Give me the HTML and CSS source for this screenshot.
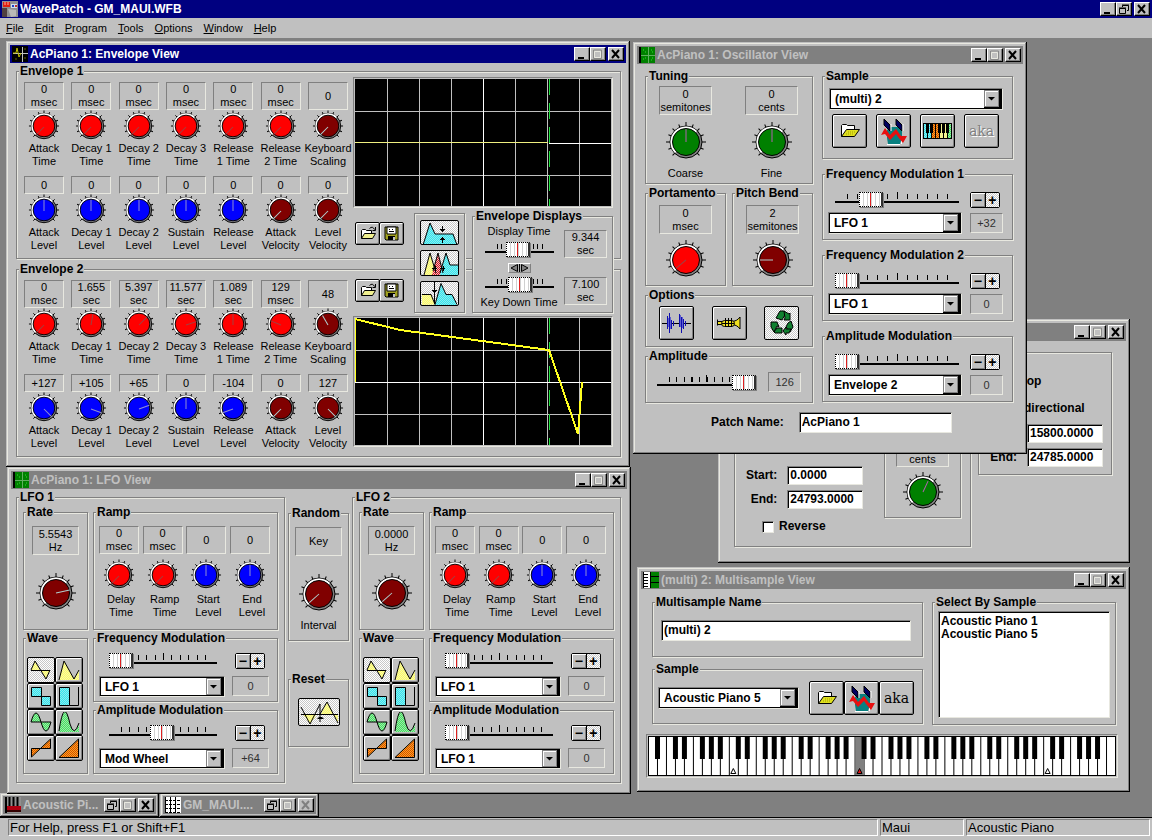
FILE: index.html
```html
<!DOCTYPE html>
<html lang="en">
<head>
    <meta charset="UTF-8">
    <title>WavePatch - GM_MAUI.WFB</title>
    <link rel="stylesheet" href="styles.css">
</head>
<body>
    <!-- shared drawings -->
    <svg class="defs" width="0" height="0">
        <defs>
            <pattern id="dots-yellow" width="2" height="2" patternUnits="userSpaceOnUse"><rect width="2" height="2" fill="#ffff60"/><path d="M0 0h1v1h-1zM1 1h1v1h-1z" fill="#f4f4b0"/></pattern>
            <pattern id="dots-cyan" width="2" height="2" patternUnits="userSpaceOnUse"><rect width="2" height="2" fill="#30e8f0"/><path d="M0 0h1v1h-1zM1 1h1v1h-1z" fill="#90e8ec"/></pattern>
            <pattern id="dots-green" width="2" height="2" patternUnits="userSpaceOnUse"><rect width="2" height="2" fill="#40e860"/><path d="M0 0h1v1h-1zM1 1h1v1h-1z" fill="#a0e0a8"/></pattern>
            <pattern id="dots-orange" width="2" height="2" patternUnits="userSpaceOnUse"><rect width="2" height="2" fill="#ffa020"/><path d="M0 0h1v1h-1zM1 1h1v1h-1z" fill="#d05000"/></pattern>
            <pattern id="dots-red" width="2" height="2" patternUnits="userSpaceOnUse"><rect width="2" height="2" fill="#f4c0c0"/><path d="M0 0h1v1h-1zM1 1h1v1h-1z" fill="#d01020"/></pattern>
            <pattern id="white-keys" width="9" height="39" patternUnits="userSpaceOnUse"><rect width="9" height="39" fill="#fff"/><path d="M0 0h1v39h-1z"/></pattern>
            <pattern id="black-keys" x="18" width="63" height="39" patternUnits="userSpaceOnUse"><path d="M7 0h5v23h-5zM16 0h5v23h-5zM34 0h5v23h-5zM43 0h5v23h-5zM52 0h5v23h-5z"/></pattern>
        </defs>
        <symbol id="dial" viewBox="0 0 36 34">
            <g stroke="#000">
                <path d="M18 17V0.5"/>
                <path d="M18 17V1" transform="rotate(22.5 18 17)"/>
                <path d="M18 17V1" transform="rotate(45 18 17)"/>
                <path d="M18 17V1" transform="rotate(67.5 18 17)"/>
                <path d="M18 17V1" transform="rotate(90 18 17)"/>
                <path d="M18 17V1" transform="rotate(112.5 18 17)"/>
                <path d="M18 17V1" transform="rotate(135 18 17)"/>
                <path d="M18 17V1" transform="rotate(-22.5 18 17)"/>
                <path d="M18 17V1" transform="rotate(-45 18 17)"/>
                <path d="M18 17V1" transform="rotate(-67.5 18 17)"/>
                <path d="M18 17V1" transform="rotate(-90 18 17)"/>
                <path d="M18 17V1" transform="rotate(-112.5 18 17)"/>
                <path d="M18 17V1" transform="rotate(-135 18 17)"/>
            </g>
            <circle cx="18" cy="17" r="13.5" fill="#808080" stroke="#000"/>
            <path d="M8.5 26.5a13.3 13.3 0 0 1 19 -19z" fill="#fff"/>
            <circle cx="18" cy="17" r="11.5" fill="currentColor" stroke="#000"/>
        </symbol>
        <symbol id="dial-big" viewBox="0 0 42 42">
            <g stroke="#000">
                <path d="M21 21V1"/>
                <path d="M21 21V2" transform="rotate(22.5 21 21)"/>
                <path d="M21 21V2" transform="rotate(45 21 21)"/>
                <path d="M21 21V2" transform="rotate(67.5 21 21)"/>
                <path d="M21 21V1" transform="rotate(90 21 21)"/>
                <path d="M21 21V2" transform="rotate(112.5 21 21)"/>
                <path d="M21 21V2" transform="rotate(135 21 21)"/>
                <path d="M21 21V2" transform="rotate(-22.5 21 21)"/>
                <path d="M21 21V2" transform="rotate(-45 21 21)"/>
                <path d="M21 21V2" transform="rotate(-67.5 21 21)"/>
                <path d="M21 21V1" transform="rotate(-90 21 21)"/>
                <path d="M21 21V2" transform="rotate(-112.5 21 21)"/>
                <path d="M21 21V2" transform="rotate(-135 21 21)"/>
            </g>
            <circle cx="21" cy="21" r="16" fill="#808080" stroke="#000"/>
            <path d="M10 32a15.5 15.5 0 0 1 22 -22z" fill="#fff"/>
            <circle cx="21" cy="21" r="13.5" fill="currentColor" stroke="#000"/>
        </symbol>
        <symbol id="ic-folder" viewBox="0 0 20 14">
            <path d="M1.5 12.5v-11l1-1h4l1 1h7v4" fill="#fff" stroke="#000"/>
            <path d="M1.5 12.5l5 -7h13l-5 7z" fill="#e0e020" stroke="#000"/>
            <path d="M6 10h8M8 8h8" stroke="#a0a000" stroke-dasharray="1 1"/>
        </symbol>
        <symbol id="ic-open" viewBox="0 0 16 15">
            <path d="M1.5 12.5v-8l1-1h3l1 1h5v3" fill="#fff" stroke="#000"/>
            <path d="M1.5 12.5l3 -5h11l-3 5z" fill="#f0f090" stroke="#000"/>
            <path d="M9.5 2.5q3-3 5 1M15.5 1v3.5h-3" fill="none" stroke="#000"/>
        </symbol>
        <symbol id="ic-save" viewBox="0 0 15 15">
            <path d="M1 1h13v13H2l-1-1z" fill="#a0a020" stroke="#000"/>
            <path d="M3 1h9v7H3z" fill="#fff" stroke="#000"/>
            <path d="M5 3.5h1M8 3.5h1M5 5.5h5" stroke="#000"/>
            <path d="M4 10h7v4H4z"/>
            <path d="M9 11h2v3H9z" fill="#c0c0c0"/>
        </symbol>
        <symbol id="ic-wave-edit" viewBox="0 0 27 27">
            <path d="M7 12l4-3h9l2 3v8l-2 6H8l-1-6z" fill="#088080"/>
            <path d="M7 26.5h13M21.5 20v6" stroke="#fff"/>
            <path d="M1 17l4-7 5 7 6-6 5 7h6l-4 7-5-6-2-3-6 6-5-6z" fill="#e81010"/>
            <path d="M4 1l6 6v6l-6-6zM16 1l6 6v6l-6-6z" fill="#000060" stroke="#000"/>
            <path d="M11 6v7M23 6v7" stroke="#fff"/>
        </symbol>
        <symbol id="ic-min" viewBox="0 0 12 10"><path d="M2 8h6v2H2z"/></symbol>
        <symbol id="ic-max" viewBox="0 0 12 10"><path d="M1.5 1h8M1.5 1v8.5h8V1" fill="none" stroke="#888"/><path d="M2.5 2.5h6v6h-6z" fill="none" stroke="#e8e8e0"/></symbol>
        <symbol id="ic-restore" viewBox="0 0 12 10"><path d="M4.5 3V1.5h6V6.5H9M4 1h7M1.5 4.5h6v5h-6zM1 4h7" fill="none" stroke="#000"/></symbol>
        <symbol id="ic-close" viewBox="0 0 12 10"><path d="M2 1l7 8M9 1l-7 8" fill="none" stroke="currentColor" stroke-width="2"/></symbol>
        <symbol id="ic-grid" viewBox="0 0 16 16">
            <rect width="16" height="16" fill="#008000"/>
            <path d="M0 0h2v16h-2z"/>
            <path d="M9.5 0v16M2 8.5h14" stroke="#60b060"/>
            <path d="M4 3h1M6 5h1M12 3h1M13 5h1M4 12h1M6 11h1M12 13h1M13 11h1" stroke="#30e030"/>
        </symbol>
        <symbol id="w-tri" viewBox="0 0 22 20"><path d="M1 10l4-9 5 9zM11 10h9l-4 9z" fill="url(#dots-yellow)"/><path d="M1 10.5h19M1 10L5 1l11 18 4-9" fill="none" stroke="#000"/></symbol>
        <symbol id="w-tri2" viewBox="0 0 22 20"><path d="M1 20L6 1l10 18 5-9v10z" fill="url(#dots-yellow)"/><path d="M1 20L6 1l10 18 5-9" fill="none" stroke="#000"/></symbol>
        <symbol id="w-sq" viewBox="0 0 22 20"><path d="M1.5 1.5h10v9h-10zM11.5 10.5h9v9h-9z" fill="url(#dots-cyan)" stroke="#000"/></symbol>
        <symbol id="w-sq2" viewBox="0 0 22 20"><path d="M1.5 19.5V1.5h10v18z" fill="url(#dots-cyan)" stroke="#000"/><path d="M11.5 19.5h9V1" fill="none" stroke="#000"/></symbol>
        <symbol id="w-sin" viewBox="0 0 22 20"><path d="M1 10q5-18 10 0q5 18 10 0z" fill="url(#dots-green)" stroke="#000"/></symbol>
        <symbol id="w-sin2" viewBox="0 0 22 20"><path d="M1 19Q6-16 12 12Q16 26 21 12v8H1z" fill="url(#dots-green)"/><path d="M1 19Q6-16 12 12Q16 26 21 11" fill="none" stroke="#000"/></symbol>
        <symbol id="w-saw" viewBox="0 0 22 20"><path d="M1.5 19v-8.500h19V1z" fill="url(#dots-orange)" stroke="#000"/></symbol>
        <symbol id="w-saw2" viewBox="0 0 22 20"><path d="M1 19.5h19.500V1z" fill="url(#dots-orange)" stroke="#000"/></symbol>
    </svg>

    <header class="titlebar app-title">
        <svg class="title-icon" viewBox="0 0 16 16"><rect width="16" height="16" fill="#909090"/><path d="M1 1h7v5H1z" fill="#e02010"/><path d="M3 1v3M6 1v3" stroke="#ffb0a0"/><path d="M9 3h6v4H9z" fill="#d0e0f0"/><path d="M10 4h2v2h-2z" fill="#2040c0"/><path d="M13 4h2v2h-2z" fill="#c03030"/><path d="M0 7h5v9H0z" fill="#504040"/><path d="M6 8l8 1v6l-5 1z" fill="#b8b8b8"/></svg>
        <h1>WavePatch - GM_MAUI.WFB</h1>
        <button aria-label="Minimize"><svg><use href="#ic-min"/></svg></button>
        <button aria-label="Restore"><svg><use href="#ic-restore"/></svg></button>
        <button class="close" aria-label="Close"><svg><use href="#ic-close"/></svg></button>
    </header>
    <nav class="menu">
        <a href="#"><u>F</u>ile</a>
        <a href="#"><u>E</u>dit</a>
        <a href="#"><u>P</u>rogram</a>
        <a href="#"><u>T</u>ools</a>
        <a href="#"><u>O</u>ptions</a>
        <a href="#"><u>W</u>indow</a>
        <a href="#"><u>H</u>elp</a>
    </nav>

    <main class="desktop">

        <!-- minimised windows -->
        <div class="tray">
            <section class="window small">
                <div class="titlebar">
                    <svg class="title-icon" viewBox="0 0 16 16"><rect width="16" height="16" fill="#909090"/><path d="M0 0h2v16H0z"/><path d="M4.5 0v9M8.5 0v9M12.5 0v9" stroke="#000" stroke-width="2"/><path d="M2 9h14v4H2z" fill="#b00010"/><path d="M2 13h14v2H2z" fill="#300"/></svg>
                    <h2>Acoustic Pi...</h2>
                    <button aria-label="Restore"><svg><use href="#ic-restore"/></svg></button>
                    <button aria-label="Maximize"><svg><use href="#ic-max"/></svg></button>
                    <button class="close" aria-label="Close"><svg><use href="#ic-close"/></svg></button>
                </div>
            </section>
            <section class="window small">
                <div class="titlebar">
                    <svg class="title-icon" viewBox="0 0 16 16"><rect width="16" height="16" fill="#fff"/><path d="M0 0h1v16H0zM5 0h1v16H5zM10 0h1v16h-1z"/><path d="M0 3.5h16M0 7.5h16M0 11.5h16M0 15.5h16" stroke="#000" stroke-dasharray="3 1"/></svg>
                    <h2>GM_MAUI....</h2>
                    <button aria-label="Restore"><svg><use href="#ic-restore"/></svg></button>
                    <button aria-label="Maximize"><svg><use href="#ic-max"/></svg></button>
                    <button class="close" aria-label="Close" disabled><svg><use href="#ic-close"/></svg></button>
                </div>
            </section>
        </div>

        <!-- sample window, mostly behind the oscillator -->
        <section class="window win-sample">
            <div class="titlebar">
                <h2></h2>
                <button aria-label="Minimize"><svg><use href="#ic-min"/></svg></button>
                <button aria-label="Maximize"><svg><use href="#ic-max"/></svg></button>
                <button class="close" aria-label="Close"><svg><use href="#ic-close"/></svg></button>
            </div>
            <div class="sample-body">
                <div class="group range-group">
                    <div class="range-fields">
                        <label class="field">Start: <input type="text" value="0.0000"></label>
                        <label class="field">End: <input type="text" value="24793.0000"></label>
                        <label class="check"><input type="checkbox"> Reverse</label>
                    </div>
                    <div class="group cents-group">
                        <div class="knob big">
                            <output><br>cents</output>
                            <svg class="green"><use href="#dial-big"/><path class="hand" d="M21 21V9" transform="rotate(25 21 21)"/></svg>
                        </div>
                    </div>
                </div>
                <div class="group loop-group">
                    <label class="radio"><input type="radio" name="loop"> Loop</label>
                    <label class="radio"><input type="radio" name="loop"> Bidirectional</label>
                    <label class="field"><input type="text" value="15800.0000"></label>
                    <label class="field">End: <input type="text" value="24785.0000"></label>
                </div>
            </div>
        </section>

        <!-- multisample window -->
        <section class="window win-multi">
            <div class="titlebar">
                <svg class="title-icon" viewBox="0 0 16 16"><rect width="16" height="16" fill="#008000"/><path d="M0 0h8v16H0z" fill="#fff"/><path d="M0 0h1v16H0zM7 0h1v16H7z"/><path d="M1 2.5h4M1 5.5h4M1 8.5h4M1 11.5h4M1 14.5h4M8 4.5h8M8 10.5h8" stroke="#000"/></svg>
                <h2>(multi) 2: Multisample View</h2>
                <button aria-label="Minimize"><svg><use href="#ic-min"/></svg></button>
                <button aria-label="Maximize"><svg><use href="#ic-max"/></svg></button>
                <button class="close" aria-label="Close"><svg><use href="#ic-close"/></svg></button>
            </div>
            <div class="multi-body">
                <div class="multi-left">
                    <fieldset>
                        <legend>Multisample Name</legend>
                        <div class="name-box"><input type="text" aria-label="Multisample Name" value="(multi) 2"></div>
                    </fieldset>
                    <fieldset>
                        <legend>Sample</legend>
                        <div class="pick-box">
                            <select class="combo" aria-label="Sample"><option>Acoustic Piano 5</option></select>
                            <div class="btn-set">
                                <button class="tool" aria-label="Open"><svg width="20" height="14"><use href="#ic-folder"/></svg></button>
                                <button class="tool" aria-label="Edit wave"><svg width="27" height="27"><use href="#ic-wave-edit"/></svg></button>
                                <button class="tool aka">aka</button>
                            </div>
                        </div>
                    </fieldset>
                </div>
                <fieldset class="select-group">
                    <legend>Select By Sample</legend>
                    <div class="list-box">
                        <select size="8" aria-label="Select By Sample">
                            <option>Acoustic Piano 1</option>
                            <option>Acoustic Piano 5</option>
                        </select>
                    </div>
                </fieldset>
            </div>
            <div class="keyboard">
                <svg viewBox="0 0 469 40" preserveAspectRatio="none" shape-rendering="crispEdges">
                    <rect width="469" height="39" fill="url(#white-keys)"/>
                    <path d="M208 0h8v39h-8z" fill="#808080"/>
                    <path d="M7 0h5v23H7z"/>
                    <rect x="18" width="441" height="39" fill="url(#black-keys)"/>
                    <path d="M0 0.5h469M0 39.5h469" stroke="#000"/>
                    <g stroke="#000" shape-rendering="auto">
                        <path d="M83 37.5l2.500-5 2.500 5z" fill="#fff"/>
                        <path d="M209.500 37.5l2.500-5 2.500 5z" fill="#e01010"/>
                        <path d="M398 37.5l2.500-5 2.500 5z" fill="#fff"/>
                    </g>
                </svg>
            </div>
        </section>

        <!-- envelope window -->
        <section class="window win-env active">
            <div class="titlebar">
                <svg class="title-icon" viewBox="0 0 16 16"><rect width="16" height="16"/><path d="M10.5 1v15M1 7.5h15" stroke="#c0c0c0"/><path d="M1 7l3 0 1-5 2 9 2-4" fill="none" stroke="#c0c000"/><path d="M3 13h2M12 3h2M12 12h2" stroke="#606000"/></svg>
                <h2>AcPiano 1: Envelope View</h2>
                <button aria-label="Minimize"><svg><use href="#ic-min"/></svg></button>
                <button aria-label="Maximize"><svg><use href="#ic-max"/></svg></button>
                <button class="close" aria-label="Close"><svg><use href="#ic-close"/></svg></button>
            </div>
            <div class="env-body">
                <fieldset>
                    <legend>Envelope 1</legend>
                    <div class="env">
                        <div class="knobs">
                            <div class="knob"><output>0<br>msec</output><svg class="red"><use href="#dial"/><path class="hand" d="M18 17V6" transform="rotate(-135 18 17)"/></svg><span>Attack<br>Time</span></div>
                            <div class="knob"><output>0<br>msec</output><svg class="red"><use href="#dial"/><path class="hand" d="M18 17V6" transform="rotate(-135 18 17)"/></svg><span>Decay 1<br>Time</span></div>
                            <div class="knob"><output>0<br>msec</output><svg class="red"><use href="#dial"/><path class="hand" d="M18 17V6" transform="rotate(-135 18 17)"/></svg><span>Decay 2<br>Time</span></div>
                            <div class="knob"><output>0<br>msec</output><svg class="red"><use href="#dial"/><path class="hand" d="M18 17V6" transform="rotate(-135 18 17)"/></svg><span>Decay 3<br>Time</span></div>
                            <div class="knob"><output>0<br>msec</output><svg class="red"><use href="#dial"/><path class="hand" d="M18 17V6" transform="rotate(-135 18 17)"/></svg><span>Release<br>1 Time</span></div>
                            <div class="knob"><output>0<br>msec</output><svg class="red"><use href="#dial"/><path class="hand" d="M18 17V6" transform="rotate(-135 18 17)"/></svg><span>Release<br>2 Time</span></div>
                            <div class="knob"><output class="tall">0</output><svg class="maroon"><use href="#dial"/><path class="hand" d="M18 17V6" transform="rotate(-135 18 17)"/></svg><span>Keyboard<br>Scaling</span></div>

                            <div class="knob"><output>0</output><svg class="blue"><use href="#dial"/><path class="hand" d="M18 17V6"/></svg><span>Attack<br>Level</span></div>
                            <div class="knob"><output>0</output><svg class="blue"><use href="#dial"/><path class="hand" d="M18 17V6"/></svg><span>Decay 1<br>Level</span></div>
                            <div class="knob"><output>0</output><svg class="blue"><use href="#dial"/><path class="hand" d="M18 17V6"/></svg><span>Decay 2<br>Level</span></div>
                            <div class="knob"><output>0</output><svg class="blue"><use href="#dial"/><path class="hand" d="M18 17V6"/></svg><span>Sustain<br>Level</span></div>
                            <div class="knob"><output>0</output><svg class="blue"><use href="#dial"/><path class="hand" d="M18 17V6"/></svg><span>Release<br>Level</span></div>
                            <div class="knob"><output>0</output><svg class="maroon"><use href="#dial"/><path class="hand" d="M18 17V6" transform="rotate(-135 18 17)"/></svg><span>Attack<br>Velocity</span></div>
                            <div class="knob"><output>0</output><svg class="maroon"><use href="#dial"/><path class="hand" d="M18 17V6" transform="rotate(-135 18 17)"/></svg><span>Level<br>Velocity</span></div>
                        </div>
                        <div class="env-right">
                            <div class="graph">
                                <svg viewBox="0 0 256 127" preserveAspectRatio="none">
                                    <path class="grid" d="M32.5 0v127M64.5 0v127M96.5 0v127M160.5 0v127M192.5 0v127M224.5 0v127M0 32.5h256M0 96.5h256"/>
                                    <path class="axis" d="M128.5 0v127M194 64.5h62"/>
                                    <path d="M0 63.5h193" stroke="#f0f080"/>
                                    <path class="marker" d="M194.5 0v127"/>
                                </svg>
                            </div>
                            <div class="file-btns">
                                <button class="tool mini" aria-label="Open envelope 1"><svg width="16" height="15"><use href="#ic-open"/></svg></button><button class="tool mini" aria-label="Save envelope 1"><svg width="15" height="15"><use href="#ic-save"/></svg></button>
                            </div>
                        </div>
                    </div>
                </fieldset>
                <fieldset>
                    <legend>Envelope 2</legend>
                    <div class="env">
                        <div class="knobs">
                            <div class="knob"><output>0<br>msec</output><svg class="red"><use href="#dial"/><path class="hand" d="M18 17V6" transform="rotate(-135 18 17)"/></svg><span>Attack<br>Time</span></div>
                            <div class="knob"><output>1.655<br>sec</output><svg class="red"><use href="#dial"/><path class="hand" d="M18 17V6" transform="rotate(10 18 17)"/></svg><span>Decay 1<br>Time</span></div>
                            <div class="knob"><output>5.397<br>sec</output><svg class="red"><use href="#dial"/><path class="hand" d="M18 17V6" transform="rotate(45 18 17)"/></svg><span>Decay 2<br>Time</span></div>
                            <div class="knob"><output>11.577<br>sec</output><svg class="red"><use href="#dial"/><path class="hand" d="M18 17V6" transform="rotate(72 18 17)"/></svg><span>Decay 3<br>Time</span></div>
                            <div class="knob"><output>1.089<br>sec</output><svg class="red"><use href="#dial"/><path class="hand" d="M18 17V6"/></svg><span>Release<br>1 Time</span></div>
                            <div class="knob"><output>129<br>msec</output><svg class="red"><use href="#dial"/><path class="hand" d="M18 17V6" transform="rotate(-68 18 17)"/></svg><span>Release<br>2 Time</span></div>
                            <div class="knob"><output class="tall">48</output><svg class="maroon"><use href="#dial"/><path class="hand" d="M18 17V6" transform="rotate(-30 18 17)"/></svg><span>Keyboard<br>Scaling</span></div>

                            <div class="knob"><output>+127</output><svg class="blue"><use href="#dial"/><path class="hand" d="M18 17V6" transform="rotate(135 18 17)"/></svg><span>Attack<br>Level</span></div>
                            <div class="knob"><output>+105</output><svg class="blue"><use href="#dial"/><path class="hand" d="M18 17V6" transform="rotate(110 18 17)"/></svg><span>Decay 1<br>Level</span></div>
                            <div class="knob"><output>+65</output><svg class="blue"><use href="#dial"/><path class="hand" d="M18 17V6" transform="rotate(70 18 17)"/></svg><span>Decay 2<br>Level</span></div>
                            <div class="knob"><output>0</output><svg class="blue"><use href="#dial"/><path class="hand" d="M18 17V6"/></svg><span>Sustain<br>Level</span></div>
                            <div class="knob"><output>-104</output><svg class="blue"><use href="#dial"/><path class="hand" d="M18 17V6" transform="rotate(-110 18 17)"/></svg><span>Release<br>Level</span></div>
                            <div class="knob"><output>0</output><svg class="maroon"><use href="#dial"/><path class="hand" d="M18 17V6" transform="rotate(-135 18 17)"/></svg><span>Attack<br>Velocity</span></div>
                            <div class="knob"><output>127</output><svg class="maroon"><use href="#dial"/><path class="hand" d="M18 17V6" transform="rotate(135 18 17)"/></svg><span>Level<br>Velocity</span></div>
                        </div>
                        <div class="env-right">
                            <div class="file-btns">
                                <button class="tool mini" aria-label="Open envelope 2"><svg width="16" height="15"><use href="#ic-open"/></svg></button><button class="tool mini" aria-label="Save envelope 2"><svg width="15" height="15"><use href="#ic-save"/></svg></button>
                            </div>
                            <div class="graph">
                                <svg viewBox="0 0 256 127" preserveAspectRatio="none">
                                    <path class="grid" d="M32.5 0v127M64.5 0v127M96.5 0v127M160.5 0v127M192.5 0v127M224.5 0v127M0 32.5h256M0 96.5h256"/>
                                    <path class="axis" d="M128.5 0v127M0 64.5h256"/>
                                    <path class="marker" d="M194.5 0v127"/>
                                    <path d="M224.5 92v14" stroke="#000080"/>
                                    <path d="M0.5 64V1" stroke="#ffff20"/>
                                    <path d="M0 1L45 12L194 32L223 116L227 64" fill="none" stroke="#ffff20" stroke-width="2"/>
                                </svg>
                            </div>
                        </div>
                    </div>
                </fieldset>
            </div>
            <!-- panels that sit over both envelopes -->
            <div class="env-panels">
                <div class="group shape-btns">
                    <button class="tool lit" aria-label="Level edit"><svg width="37" height="24"><path d="M2 24L9 2l5 11h18l4 11z" fill="url(#dots-cyan)"/><path d="M2 24L9 2l5 11h18l4 11" fill="none" stroke="#000"/><path d="M21.5 5v6M19 8.5h5M20 9.5h3M21.5 22v-6M19 18.5h5M20 17.5h3" stroke="#000"/></svg></button>
                    <button class="tool lit" aria-label="Time edit"><svg width="37" height="24"><path d="M3 24L9 2l6 22z" fill="url(#dots-yellow)"/><path d="M11 24l6-22 5 22z" fill="url(#dots-red)"/><path d="M19 24l6-22 4 12h8v10z" fill="url(#dots-cyan)"/><path d="M3 24L9 2l6 20M12 20l5-18 5 20M19 22l6-20 4 12h8" fill="none" stroke="#000"/><path d="M11 17.5h5M14.5 15v5M19 17.5h5M22.5 15v5" stroke="#000"/></svg></button>
                    <button class="tool lit" aria-label="Release edit"><svg width="37" height="24"><path d="M1 24V13.5h9l4 10z" fill="url(#dots-yellow)"/><path d="M14 24l6-22 5 12h6l5 10z" fill="url(#dots-cyan)"/><path d="M1 13.5h9l4 10 6-21 5 11h6l5 10" fill="none" stroke="#000"/><path d="M13.5 1v22M11 9.5h5M12 10.5h3" stroke="#000"/></svg></button>
                </div>
                <fieldset class="displays">
                    <legend>Envelope Displays</legend>
                    <div class="displays-body">
                        <div class="displays-sliders">
                            <label for="display-time">Display Time</label>
                            <input class="slider" type="range" id="display-time" min="0" max="127" value="60">
                            <button class="link-btn" aria-label="Link times"><svg width="21" height="8"><path d="M8.5 0.5v7L2 4zM12.5 0.5v7L19 4z" fill="#808080" stroke="#000"/><path d="M10.5 0v8" stroke="#000"/></svg></button>
                            <input class="slider" type="range" id="key-time" min="0" max="127" value="65">
                            <label for="key-time">Key Down Time</label>
                        </div>
                        <div class="displays-values">
                            <output>9.344<br>sec</output>
                            <output>7.100<br>sec</output>
                        </div>
                    </div>
                </fieldset>
            </div>
        </section>

        <!-- LFO window -->
        <section class="window win-lfo">
            <div class="titlebar">
                <svg class="title-icon"><use href="#ic-grid"/></svg>
                <h2>AcPiano 1: LFO View</h2>
                <button aria-label="Minimize"><svg><use href="#ic-min"/></svg></button>
                <button aria-label="Maximize"><svg><use href="#ic-max"/></svg></button>
                <button class="close" aria-label="Close"><svg><use href="#ic-close"/></svg></button>
            </div>
            <div class="lfo-body">
                <fieldset class="lfo">
                    <legend>LFO 1</legend>
                    <div class="lfo-grid">
                        <fieldset>
                            <legend>Rate</legend>
                            <div class="rate-box">
                                <div class="knob big"><output>5.5543<br>Hz</output><svg class="maroon"><use href="#dial-big"/><path class="hand" d="M21 21V7" transform="rotate(78 21 21)"/></svg></div>
                            </div>
                        </fieldset>
                        <fieldset>
                            <legend>Ramp</legend>
                            <div class="ramp-box">
                                <div class="knob"><output class="tall">0<br>msec</output><svg class="red"><use href="#dial"/><path class="hand" d="M18 17V6" transform="rotate(-135 18 17)"/></svg><span>Delay<br>Time</span></div>
                                <div class="knob"><output class="tall">0<br>msec</output><svg class="red"><use href="#dial"/><path class="hand" d="M18 17V6" transform="rotate(-135 18 17)"/></svg><span>Ramp<br>Time</span></div>
                                <div class="knob"><output class="tall">0</output><svg class="blue"><use href="#dial"/><path class="hand" d="M18 17V6"/></svg><span>Start<br>Level</span></div>
                                <div class="knob"><output class="tall">0</output><svg class="blue"><use href="#dial"/><path class="hand" d="M18 17V6"/></svg><span>End<br>Level</span></div>
                            </div>
                        </fieldset>
                        <fieldset>
                            <legend>Wave</legend>
                            <div class="wave-box">
                                <button class="tool lit" aria-label="Triangle"><svg><use href="#w-tri"/></svg></button>
                                <button class="tool" aria-label="Positive triangle"><svg><use href="#w-tri2"/></svg></button>
                                <button class="tool" aria-label="Square"><svg><use href="#w-sq"/></svg></button>
                                <button class="tool" aria-label="Positive square"><svg><use href="#w-sq2"/></svg></button>
                                <button class="tool" aria-label="Sine"><svg><use href="#w-sin"/></svg></button>
                                <button class="tool" aria-label="Positive sine"><svg><use href="#w-sin2"/></svg></button>
                                <button class="tool" aria-label="Sawtooth"><svg><use href="#w-saw"/></svg></button>
                                <button class="tool" aria-label="Positive sawtooth"><svg><use href="#w-saw2"/></svg></button>
                            </div>
                        </fieldset>
                        <div class="lfo-mods">
                            <fieldset>
                                <legend>Frequency Modulation</legend>
                                <div class="mod">
                                    <input class="slider" type="range" aria-label="Amount" min="0" max="127" value="0">
                                    <div class="plusminus"><button>−</button><button class="lit">+</button></div>
                                    <select class="combo" aria-label="Source"><option>LFO 1</option></select>
                                    <output>0</output>
                                </div>
                            </fieldset>
                            <fieldset>
                                <legend>Amplitude Modulation</legend>
                                <div class="mod">
                                    <input class="slider" type="range" aria-label="Amount" min="0" max="127" value="62">
                                    <div class="plusminus"><button>−</button><button class="lit">+</button></div>
                                    <select class="combo" aria-label="Source"><option>Mod Wheel</option></select>
                                    <output>+64</output>
                                </div>
                            </fieldset>
                        </div>
                    </div>
                </fieldset>

                <div class="lfo-mid">
                    <fieldset>
                        <legend>Random</legend>
                        <div class="random-box">
                            <div class="knob big"><output>Key</output><svg class="maroon"><use href="#dial-big"/><path class="hand" d="M21 21V8" transform="rotate(-132 21 21)"/></svg><span>Interval</span></div>
                        </div>
                    </fieldset>
                    <fieldset>
                        <legend>Reset</legend>
                        <div class="reset-box">
                            <button class="tool lit" aria-label="Reset"><svg width="40" height="26"><path d="M4 15h14l-7 10zM22 15l6-12 6 12zM34 15h5v9z" fill="url(#dots-yellow)"/><path d="M2 8l9 17L21 5v18M21 15l7-12 11 21M2 15.5h37" fill="none" stroke="#000"/><path d="M18.5 19.5h6M19.5 18.5h4" stroke="#000"/></svg></button>
                        </div>
                    </fieldset>
                </div>

                <fieldset class="lfo">
                    <legend>LFO 2</legend>
                    <div class="lfo-grid">
                        <fieldset>
                            <legend>Rate</legend>
                            <div class="rate-box">
                                <div class="knob big"><output>0.0000<br>Hz</output><svg class="maroon"><use href="#dial-big"/><path class="hand" d="M21 21V8" transform="rotate(-132 21 21)"/></svg></div>
                            </div>
                        </fieldset>
                        <fieldset>
                            <legend>Ramp</legend>
                            <div class="ramp-box">
                                <div class="knob"><output class="tall">0<br>msec</output><svg class="red"><use href="#dial"/><path class="hand" d="M18 17V6" transform="rotate(-135 18 17)"/></svg><span>Delay<br>Time</span></div>
                                <div class="knob"><output class="tall">0<br>msec</output><svg class="red"><use href="#dial"/><path class="hand" d="M18 17V6" transform="rotate(-135 18 17)"/></svg><span>Ramp<br>Time</span></div>
                                <div class="knob"><output class="tall">0</output><svg class="blue"><use href="#dial"/><path class="hand" d="M18 17V6"/></svg><span>Start<br>Level</span></div>
                                <div class="knob"><output class="tall">0</output><svg class="blue"><use href="#dial"/><path class="hand" d="M18 17V6"/></svg><span>End<br>Level</span></div>
                            </div>
                        </fieldset>
                        <fieldset>
                            <legend>Wave</legend>
                            <div class="wave-box">
                                <button class="tool lit" aria-label="Triangle"><svg><use href="#w-tri"/></svg></button>
                                <button class="tool" aria-label="Positive triangle"><svg><use href="#w-tri2"/></svg></button>
                                <button class="tool" aria-label="Square"><svg><use href="#w-sq"/></svg></button>
                                <button class="tool" aria-label="Positive square"><svg><use href="#w-sq2"/></svg></button>
                                <button class="tool" aria-label="Sine"><svg><use href="#w-sin"/></svg></button>
                                <button class="tool" aria-label="Positive sine"><svg><use href="#w-sin2"/></svg></button>
                                <button class="tool" aria-label="Sawtooth"><svg><use href="#w-saw"/></svg></button>
                                <button class="tool" aria-label="Positive sawtooth"><svg><use href="#w-saw2"/></svg></button>
                            </div>
                        </fieldset>
                        <div class="lfo-mods">
                            <fieldset>
                                <legend>Frequency Modulation</legend>
                                <div class="mod">
                                    <input class="slider" type="range" aria-label="Amount" min="0" max="127" value="0">
                                    <div class="plusminus"><button>−</button><button class="lit">+</button></div>
                                    <select class="combo" aria-label="Source"><option>LFO 1</option></select>
                                    <output>0</output>
                                </div>
                            </fieldset>
                            <fieldset>
                                <legend>Amplitude Modulation</legend>
                                <div class="mod">
                                    <input class="slider" type="range" aria-label="Amount" min="0" max="127" value="0">
                                    <div class="plusminus"><button>−</button><button class="lit">+</button></div>
                                    <select class="combo" aria-label="Source"><option>LFO 1</option></select>
                                    <output>0</output>
                                </div>
                            </fieldset>
                        </div>
                    </div>
                </fieldset>
            </div>
        </section>

        <!-- oscillator window -->
        <section class="window win-osc">
            <div class="titlebar">
                <svg class="title-icon"><use href="#ic-grid"/></svg>
                <h2>AcPiano 1: Oscillator View</h2>
                <button aria-label="Minimize"><svg><use href="#ic-min"/></svg></button>
                <button aria-label="Maximize"><svg><use href="#ic-max"/></svg></button>
                <button class="close" aria-label="Close"><svg><use href="#ic-close"/></svg></button>
            </div>
            <div class="osc-body">
                <div class="osc-left">
                    <fieldset>
                        <legend>Tuning</legend>
                        <div class="tuning-box">
                            <div class="knob big"><output>0<br>semitones</output><svg class="green"><use href="#dial-big"/><path class="hand" d="M21 21V8"/></svg><span>Coarse</span></div>
                            <div class="knob big"><output>0<br>cents</output><svg class="green"><use href="#dial-big"/><path class="hand" d="M21 21V8"/></svg><span>Fine</span></div>
                        </div>
                    </fieldset>
                    <div class="osc-pair">
                        <fieldset>
                            <legend>Portamento</legend>
                            <div class="pair-box">
                                <div class="knob big"><output>0<br>msec</output><svg class="red"><use href="#dial-big"/><path class="hand" d="M21 21V8" transform="rotate(-130 21 21)"/></svg></div>
                            </div>
                        </fieldset>
                        <fieldset>
                            <legend>Pitch Bend</legend>
                            <div class="pair-box">
                                <div class="knob big"><output>2<br>semitones</output><svg class="maroon"><use href="#dial-big"/><path class="hand" d="M21 21V8" transform="rotate(-90 21 21)"/></svg></div>
                            </div>
                        </fieldset>
                    </div>
                    <fieldset>
                        <legend>Options</legend>
                        <div class="options-box">
                            <button class="tool" aria-label="Waveform"><svg width="29" height="20"><path d="M0 10.5h29" stroke="#000"/><path d="M5.5 3v13M7.5 0v20M9.5 7v9M11.5 8v5M17.500 1v13M19.5 4v16M21.5 6v10M23.5 8v5" stroke="#1010b0"/><path d="M6.500 5v9M8.500 4v12M18.500 2v12M20.500 4v11" stroke="#6060d0"/></svg></button>
                            <button class="tool" aria-label="Instrument"><svg width="26" height="14"><path d="M1 5.5h14q6 0 9-4.500v12q-3-4.500-9-4.500H1M1.5 3.500v6" fill="#f0e020" stroke="#000"/><rect x="5.500" y="4.500" width="13" height="6" rx="3" fill="#f0e020" stroke="#000"/><path d="M6 7.5h12M9.5 2v9M12.5 2v9M15.5 2v9" stroke="#000"/></svg></button>
                            <button class="tool lit" aria-label="Recycle"><svg width="24" height="26"><g fill="#108030" stroke="#000"><path d="M6 8l4-7h4l2 2-4 7z"/><path d="M14 1l5 3 1-1v7h-6l1-2z"/><path d="M1 12h6l2 5-2-1-3 6-3-5z"/><path d="M4 22l3-4h5v5H5z"/><path d="M18 13l3-2 2 6-3 5-4-5z"/><path d="M13 21l3-4v2h5l-2 4h-3v2z"/></g></svg></button>
                        </div>
                    </fieldset>
                    <fieldset>
                        <legend>Amplitude</legend>
                        <div class="amp-box">
                            <input class="slider" type="range" aria-label="Amplitude" min="0" max="127" value="126">
                            <output>126</output>
                        </div>
                    </fieldset>
                </div>
                <div class="osc-right">
                    <fieldset>
                        <legend>Sample</legend>
                        <div class="osc-sample">
                            <select class="combo" aria-label="Sample"><option>(multi) 2</option></select>
                            <div class="sample-btns">
                                <button class="tool" aria-label="Open"><svg width="20" height="14"><use href="#ic-folder"/></svg></button>
                                <button class="tool" aria-label="Edit wave"><svg width="27" height="27"><use href="#ic-wave-edit"/></svg></button>
                                <button class="tool" aria-label="Keyboard"><svg width="29" height="16"><rect x="0.5" y="0.5" width="28" height="15" fill="#fff" stroke="#000"/><path d="M1 1h7v14H1z" fill="url(#dots-cyan)"/><path d="M8 1h8v14H8z" fill="url(#dots-orange)"/><path d="M16 1h8v14h-8z" fill="#f4f490"/><path d="M24 1h4v14h-4z" fill="url(#dots-green)"/><path d="M4.5 1v14M8.5 1v14M12.5 1v14M16.5 1v14M20.5 1v14M24.5 1v14" stroke="#000"/><path d="M3 1h3v9H3zM7 1h3v9H7zM15 1h3v9h-3zM19 1h3v9h-3zM23 1h3v9h-3z"/></svg></button>
                                <button class="tool aka" disabled>aka</button>
                            </div>
                        </div>
                    </fieldset>
                    <fieldset>
                        <legend>Frequency Modulation 1</legend>
                        <div class="mod">
                            <input class="slider" type="range" aria-label="Amount" min="0" max="127" value="30">
                            <div class="plusminus"><button>−</button><button class="lit">+</button></div>
                            <select class="combo" aria-label="Source"><option>LFO 1</option></select>
                            <output>+32</output>
                        </div>
                    </fieldset>
                    <fieldset>
                        <legend>Frequency Modulation 2</legend>
                        <div class="mod">
                            <input class="slider" type="range" aria-label="Amount" min="0" max="127" value="0">
                            <div class="plusminus"><button>−</button><button class="lit">+</button></div>
                            <select class="combo" aria-label="Source"><option>LFO 1</option></select>
                            <output>0</output>
                        </div>
                    </fieldset>
                    <fieldset>
                        <legend>Amplitude Modulation</legend>
                        <div class="mod">
                            <input class="slider" type="range" aria-label="Amount" min="0" max="127" value="0">
                            <div class="plusminus"><button>−</button><button class="lit">+</button></div>
                            <select class="combo" aria-label="Source"><option>Envelope 2</option></select>
                            <output>0</output>
                        </div>
                    </fieldset>
                </div>
            </div>
            <div class="patch-name">
                <label for="patch">Patch Name:</label>
                <input type="text" id="patch" value="AcPiano 1">
            </div>
        </section>
    </main>

    <footer class="status">
        <span class="help">For Help, press F1 or Shift+F1</span>
        <span class="device">Maui</span>
        <span class="patch">Acoustic Piano</span>
    </footer>
</body>
</html>
```
FILE: styles.css
```css
* {
    box-sizing: border-box;
    margin: 0;
    padding: 0;
}

:root {
    --face: #c0c0c0;
    --light: #e8e8e0;
    --shade: #808080;
    --navy: #000080;
    --dither: repeating-conic-gradient(#fff 0 25%, #c8c8c8 0 50%) 0 0 / 2px 2px;
}

body {
    display: flex;
    flex-direction: column;
    height: 100vh;
    overflow: hidden;
    background: var(--face);
    color: #000;
    font: 11px/13px "Liberation Sans", Arial, sans-serif;
}

button, input, select, option {
    font: bold 12px/14px "Liberation Sans", Arial, sans-serif;
    color: #000;
    border-radius: 0;
}

svg {
    display: block;
    flex: none;
}
.defs {
    position: absolute;
}

/* title bars */
.titlebar {
    display: flex;
    align-items: center;
    height: 18px;
    padding: 0 2px;
    background: var(--shade);
    color: var(--face);
}
.app-title, .active .titlebar {
    background: var(--navy);
    color: #fff;
}
.title-icon {
    width: 16px;
    height: 16px;
}
.titlebar h1, .titlebar h2 {
    flex: 1;
    padding-left: 2px;
    font-size: 12px;
    line-height: 18px;
    white-space: nowrap;
    overflow: hidden;
}
.titlebar button {
    display: flex;
    justify-content: center;
    align-items: center;
    width: 16px;
    height: 14px;
    border: 1px solid;
    border-color: #fff #000 #000 #fff;
    box-shadow: inset -1px -1px var(--shade);
    background: var(--face);
}
.titlebar button svg {
    width: 12px;
    height: 10px;
}
.titlebar .close {
    margin-left: 2px;
}
.titlebar button:disabled {
    color: var(--shade);
}

.menu {
    display: flex;
    gap: 11px;
    height: 20px;
    padding-left: 6px;
    line-height: 20px;
}
.menu a {
    color: #000;
    text-decoration: none;
}

.desktop {
    position: relative;
    flex: 1;
    min-height: 0;
    overflow: hidden;
    background: var(--shade);
}

/* windows, placed freely on the desktop */
.window {
    position: absolute;
    padding: 4px;
    background: var(--face);
    box-shadow: inset -1px -1px #000, inset 1px 1px var(--face),
                inset -2px -2px var(--shade), inset 2px 2px var(--light);
}
.win-env {
    left: 6px;
    top: 3px;
    width: 624px;
    height: 426px;
}
.win-lfo {
    left: 7px;
    top: 429px;
    width: 624px;
    height: 327px;
}
.win-osc {
    left: 633px;
    top: 4px;
    width: 394px;
    height: 412px;
}
.win-sample {
    left: 718px;
    top: 281px;
    width: 412px;
    height: 244px;
}
.win-multi {
    left: 637px;
    top: 529px;
    width: 493px;
    height: 225px;
}
.tray {
    position: absolute;
    left: 0;
    bottom: 0;
    display: flex;
    gap: 1px;
}
.window.small {
    position: static;
    width: 159px;
    padding: 3px;
}

/* group boxes */
fieldset, .group {
    min-width: 0;
    border: 1px solid var(--shade);
    box-shadow: 1px 1px var(--light), inset 1px 1px var(--light);
}
legend {
    margin-left: 2px;
    padding: 0 1px;
    background: var(--face);
    font-size: 12px;
    font-weight: bold;
    line-height: 12px;
    white-space: nowrap;
}

output {
    display: grid;
    place-content: center;
    border: 1px solid;
    border-color: var(--shade) var(--light) var(--light) var(--shade);
    text-align: center;
    white-space: nowrap;
}

/* knobs */
.knob {
    display: flex;
    flex-direction: column;
    align-items: center;
    width: 40px;
    text-align: center;
    white-space: nowrap;
}
.knob output {
    width: 100%;
    min-height: 18px;
}
.knob .tall {
    min-height: 28px;
}
.knob svg {
    width: 36px;
    height: 32px;
    overflow: visible;
}
.knob use {
    width: 36px;
    height: 34px;
}
.knob.big {
    width: 53px;
}
.knob.big output {
    height: 29px;
}
.knob.big svg {
    width: 42px;
    height: 42px;
}
.knob.big use {
    width: 42px;
    height: 42px;
}
.red { color: #f00; }
.blue { color: #00f; }
.maroon { color: #800000; }
.green { color: #008000; }
.hand { fill: none; }
.red .hand { stroke: #a04040; }
.blue .hand { stroke: #9090d0; }
.maroon .hand { stroke: #b0d0d0; }
.green .hand { stroke: #b060b0; }

/* sliders */
.slider {
    -webkit-appearance: none;
    appearance: none;
    width: 100%;
    min-width: 0;
    height: 15px;
    background:
        linear-gradient(#000, #000) 0 9px / 100% 2px no-repeat,
        linear-gradient(#000, #000) 50% 0 / 1px 7px no-repeat,
        repeating-linear-gradient(90deg, #000 0 1px, transparent 1px calc((100% - 1px) / 10)) 12px 2px / calc(100% - 23px) 5px no-repeat;
}
.slider::-webkit-slider-thumb {
    -webkit-appearance: none;
    width: 24px;
    height: 15px;
    border: 1px dotted #000;
    border-right: 2px solid #303030;
    box-shadow: 1px 1px #808080;
    background:
        linear-gradient(#e02020, #e02020) 10px 0 / 1px 100% no-repeat,
        repeating-linear-gradient(90deg, #fff 0 3px, #d0d0d0 3px 4px);
}

/* text boxes and lists */
input[type="text"] {
    height: 21px;
    padding: 0 2px 2px;
    border: 1px solid;
    border-color: var(--shade) var(--light) var(--light) var(--shade);
    box-shadow: inset 1px 1px #000;
    background: #fff;
}
.combo {
    -webkit-appearance: none;
    appearance: none;
    width: 100%;
    min-width: 0;
    height: 22px;
    padding: 0 20px 0 5px;
    border: 1px solid;
    border-color: var(--shade) var(--light) var(--light) var(--shade);
    box-shadow: inset 1px 1px #000, inset -1px -1px #000;
    background: #fff url("data:image/svg+xml,%3Csvg xmlns='http://www.w3.org/2000/svg' width='17' height='19'%3E%3Crect width='17' height='19'/%3E%3Crect width='15' height='17' fill='%23808080'/%3E%3Cpath d='M1 1h13v15H1z' fill='%23fff'/%3E%3Cpath d='M2 2h12v14H2z' fill='%23c0c0c0'/%3E%3Cpath d='M4 7h7L7.5 10.5z'/%3E%3C/svg%3E") right 1px top 1px no-repeat;
}

/* tool buttons */
.tool {
    display: flex;
    justify-content: center;
    align-items: center;
    width: 35px;
    height: 34px;
    border: 1px solid #000;
    border-radius: 2px;
    box-shadow: inset 1px 1px #fff, inset -1px -1px var(--shade);
    background: var(--face);
    overflow: hidden;
}
.lit {
    box-shadow: none;
    background: var(--dither);
}
.tool.mini {
    width: 25px;
    height: 23px;
}
.aka {
    font: 14px/14px "DejaVu Serif", serif;
}
.aka:disabled {
    color: var(--shade);
    text-shadow: 1px 1px #fff;
}

.plusminus {
    display: flex;
    border: 1px solid #000;
    border-radius: 2px;
}
.plusminus button {
    flex: 1;
    height: 14px;
    border: 0;
    font-size: 14px;
    line-height: 13px;
    background: var(--face);
    box-shadow: inset 1px 1px #fff, inset -1px -1px var(--shade);
}
.plusminus .lit {
    border-left: 1px solid #000;
    box-shadow: none;
    background: var(--dither);
}

/* modulation: slider over source list */
.mod {
    display: grid;
    grid-template-columns: minmax(0, 1fr) 33px;
    column-gap: 8px;
    row-gap: 4px;
    padding: 12px 9px 5px 5px;
}
.mod .slider {
    width: calc(100% - 10px);
    margin-left: 7px;
}
.mod .plusminus {
    width: 30px;
    height: 16px;
}
.mod output {
    height: 20px;
    margin-top: 1px;
    color: #303030;
}

/* envelope view */
.env-body {
    display: flex;
    flex-direction: column;
    gap: 4px;
    padding: 2px 5px 0 6px;
}
.env {
    display: flex;
    gap: 5px;
    padding: 0 7px;
}
.knobs {
    display: grid;
    grid-template-columns: repeat(7, 40px);
    justify-content: space-between;
    row-gap: 8px;
    flex: 0 0 324px;
    padding: 5px 0 6px;
}
.env-right {
    flex: 1;
    display: flex;
    flex-direction: column;
    gap: 14px;
}
.graph {
    padding: 1px;
    border: 1px solid;
    border-color: var(--shade) var(--light) var(--light) var(--shade);
}
.graph svg {
    width: 100%;
    height: 127px;
    background: #000;
    shape-rendering: crispEdges;
}
.grid { stroke: #c0c0c0; }
.axis { stroke: #fff; }
.marker {
    stroke: #20e040;
    stroke-dasharray: 16 8;
}
.file-btns {
    display: flex;
    padding-left: 2px;
}
.file-btns:first-child {
    padding-top: 4px;
}
.file-btns .tool + .tool {
    margin-left: -1px;
}

.env-panels {
    position: absolute;
    left: 408px;
    top: 169px;
    display: flex;
    gap: 7px;
    align-items: stretch;
    height: 103px;
}
.shape-btns {
    display: flex;
    flex-direction: column;
    gap: 5px;
    margin-top: 3px;
    padding: 6px 5px;
    background: var(--face);
}
.shape-btns .tool {
    width: 39px;
    height: 26px;
}
.displays {
    width: 141px;
    background: var(--face);
}
.displays-body {
    display: flex;
    gap: 5px;
    padding: 3px 5px 0 6px;
}
.displays-sliders {
    display: flex;
    flex-direction: column;
    align-items: center;
    gap: 4px;
    width: 80px;
}
.displays-sliders .slider {
    width: 69px;
}
.link-btn {
    display: flex;
    align-items: center;
    justify-content: center;
    width: 23px;
    height: 10px;
    margin-top: 2px;
    border: 1px solid;
    border-color: #fff var(--shade) var(--shade) #fff;
    background: #b0b0b0;
}
.displays-values {
    display: flex;
    flex-direction: column;
    gap: 19px;
    width: 43px;
    padding-top: 5px;
}

/* LFO view */
.lfo-body {
    display: flex;
    gap: 3px;
    padding: 2px 6px 0 5px;
}
.lfo {
    flex: 1;
}
.lfo-grid {
    display: grid;
    grid-template-columns: 65px minmax(0, 1fr);
    grid-template-rows: 124px auto;
    gap: 2px 5px;
    padding: 3px 6px 8px;
}
.lfo-mods {
    display: flex;
    flex-direction: column;
    gap: 2px;
}
.rate-box {
    padding: 8px 8px 0;
}
.rate-box .knob, .random-box .knob {
    width: 47px;
}
.rate-box svg, .random-box svg {
    margin-top: 17px;
}
.ramp-box {
    display: flex;
    justify-content: space-between;
    padding: 8px 7px 0 5px;
}
.ramp-box svg {
    margin: 5px 0 2px;
}
.ramp-box span {
    padding-left: 4px;
}
.wave-box {
    display: grid;
    grid-template-columns: 28px 28px;
    padding: 13px 3px 0;
}
.wave-box .tool {
    width: 28px;
    height: 26px;
}
.wave-box svg {
    width: 22px;
    height: 20px;
}
.lfo .mod {
    grid-template-columns: minmax(0, 1fr) 37px;
    column-gap: 7px;
    row-gap: 7px;
    padding: 9px 8px 4px 5px;
}
.lfo .mod .slider {
    width: calc(100% - 18px);
    margin-left: 10px;
}
.lfo .mod .combo {
    height: 21px;
}
.lfo .mod .plusminus {
    margin-left: 3px;
}
.lfo .mod output {
    margin-top: 0;
}
.lfo-mid {
    display: flex;
    flex-direction: column;
    gap: 32px;
    width: 61px;
    padding-top: 16px;
}
.random-box {
    padding: 8px 6px;
}
.random-box svg {
    margin-bottom: 4px;
}
.reset-box {
    padding: 13px 9px 20px;
}
.reset-box .tool {
    width: 42px;
    height: 28px;
}

/* oscillator view */
.osc-body {
    display: flex;
    gap: 9px;
    padding: 6px 10px 0 8px;
}
.osc-left {
    display: flex;
    flex-direction: column;
    gap: 3px;
    width: 168px;
}
.osc-right {
    flex: 1;
    min-width: 0;
    display: flex;
    flex-direction: column;
    gap: 9px;
}
.tuning-box {
    display: flex;
    gap: 33px;
    padding: 4px 13px 3px;
}
.tuning-box svg {
    margin: 6px 0 4px;
}
.osc-pair {
    display: flex;
    gap: 6px;
}
.osc-pair fieldset {
    flex: 1;
}
.pair-box {
    padding: 6px 12px 3px 13px;
}
.pair-box svg {
    margin: 5px 0 1px;
}
.options-box {
    display: flex;
    justify-content: space-between;
    padding: 5px 13px 6px;
}
.amp-box {
    display: flex;
    align-items: center;
    gap: 12px;
    padding: 10px 11px;
}
.amp-box .slider {
    width: 100px;
}
.amp-box output {
    width: 33px;
    height: 20px;
    color: #303030;
}
.osc-sample {
    padding: 6px 9px 10px 6px;
}
.sample-btns {
    display: flex;
    justify-content: space-between;
    padding: 4px 4px 0 3px;
}
.patch-name {
    display: flex;
    align-items: center;
    gap: 15px;
    padding: 9px 0 0 74px;
    font-size: 12px;
    font-weight: bold;
}
.patch-name input {
    width: 153px;
}

/* sample view */
.sample-body {
    display: flex;
    align-items: flex-start;
    gap: 7px;
    padding: 10px 14px 0 12px;
    font-size: 12px;
    font-weight: bold;
}
.range-group {
    display: flex;
    justify-content: space-between;
    align-items: flex-end;
    flex: 1;
    height: 196px;
    padding: 0 9px 13px 11px;
}
.range-fields {
    display: flex;
    flex-direction: column;
    gap: 5px;
}
.field {
    display: flex;
    justify-content: flex-end;
    align-items: center;
    gap: 10px;
}
.field input[type="text"] {
    width: 76px;
    height: 19px;
    padding-bottom: 1px;
}
.check, .radio {
    display: flex;
    align-items: center;
    gap: 5px;
}
.check {
    margin: 6px 0 0 16px;
}
.check input {
    -webkit-appearance: none;
    appearance: none;
    width: 12px;
    height: 12px;
    border: 1px solid;
    border-color: var(--shade) var(--light) var(--light) var(--shade);
    box-shadow: inset 1px 1px #000;
    background: #fff;
}
.radio input {
    width: 13px;
    height: 13px;
}
.cents-group {
    display: flex;
    justify-content: center;
    width: 77px;
    margin-bottom: 15px;
    padding-bottom: 4px;
    font-size: 11px;
    font-weight: normal;
}
.cents-group svg {
    margin-top: 4px;
}
.loop-group {
    display: flex;
    flex-direction: column;
    width: 134px;
    margin-top: 1px;
    padding: 22px 8px 7px 15px;
    gap: 5px;
}
.loop-group .radio {
    margin-bottom: 9px;
}
.loop-group .radio + .radio {
    margin-bottom: 4px;
}

/* multisample view */
.multi-body {
    display: flex;
    gap: 9px;
    padding: 7px 10px 0 11px;
}
.multi-left {
    flex: 1;
    display: flex;
    flex-direction: column;
    gap: 6px;
}
.name-box {
    padding: 12px 11px 15px 8px;
}
.name-box input {
    display: block;
    width: 100%;
}
.pick-box {
    display: flex;
    align-items: center;
    gap: 10px;
    padding: 6px 8px 8px 5px;
}
.btn-set {
    display: flex;
    flex: none;
}
.select-group {
    width: 184px;
}
.list-box {
    padding: 3px 5px 6px;
}
.list-box select {
    display: block;
    width: 100%;
    height: 107px;
    border: 1px solid;
    border-color: var(--shade) var(--light) var(--light) var(--shade);
    box-shadow: inset 1px 1px #000;
    background: #fff;
    overflow: hidden;
    padding: 2px 0 0 1px;
}
.list-box option {
    height: 13px;
    min-height: 13px;
    padding: 0 1px;
    line-height: 13px;
}
.keyboard {
    margin: 9px 8px 0 5px;
    padding: 1px;
    border: 1px solid;
    border-color: var(--shade) var(--light) var(--light) var(--shade);
}
.keyboard svg {
    width: 100%;
    height: 40px;
}

/* status bar */
.status {
    display: flex;
    gap: 2px;
    height: 23px;
    padding: 1px 2px 4px 8px;
    border-top: 1px solid #000;
    font-size: 13px;
    line-height: 15px;
}
.status span {
    padding-left: 1px;
    border: 1px solid;
    border-color: var(--shade) #fff #fff var(--shade);
}
.status .help {
    flex: 1;
}
.status .device {
    width: 84px;
}
.status .patch {
    width: 184px;
}
```
